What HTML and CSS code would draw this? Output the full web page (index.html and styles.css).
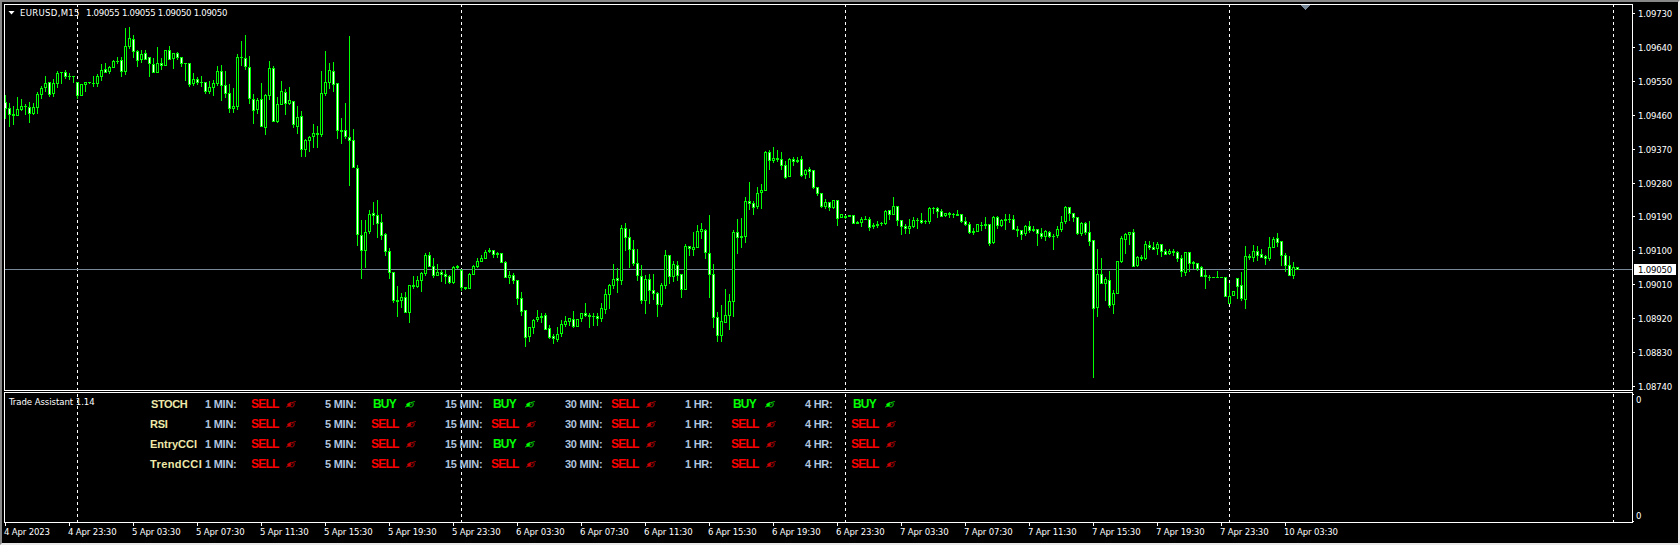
FILE: index.html
```html
<!DOCTYPE html>
<html lang="en">
<head>
  <meta charset="UTF-8" />
  <meta name="viewport" content="width=device-width, initial-scale=1.0"/>
  <title>EURUSD,M15</title>
  <link rel="stylesheet" href="styles.css">
</head>
<body>

<div class="window">
  <div class="panel chart">
    <svg class="candles" id="candles" viewBox="5 5 1627 385" width="1627" height="385" shape-rendering="crispEdges">
      <path d="M5 269h1627v1h-1627z" fill="#778899"/>
      <path d="M1301 5h9v1h-1v1h-1v1h-1v1h-1v1h-1v-1h-1v-1h-1v-1h-1v-1h-1z" fill="#778899"/>
    </svg>
    <div class="title">
      <span class="arrow"></span>
      <span class="symbol">EURUSD,M15</span>
      <span class="ohlc">1.09055 1.09055 1.09050 1.09050</span>
    </div>
  </div>

  <div class="price-axis">
    <span>1.09730</span>
    <span>1.09640</span>
    <span>1.09550</span>
    <span>1.09460</span>
    <span>1.09370</span>
    <span>1.09280</span>
    <span>1.09190</span>
    <span>1.09100</span>
    <span>1.09010</span>
    <span>1.08920</span>
    <span>1.08830</span>
    <span>1.08740</span>
    <b class="current">1.09050</b>
  </div>

  <div class="panel assistant">
    <div class="assistant-name">Trade Assistant 1.14</div>
    <div class="signals" id="signals"></div>
  </div>

  <div class="sub-axis">
    <span>0</span>
    <span>0</span>
  </div>

  <div class="time-axis" id="times"></div>
</div>

<script>
  // high, low, body top, body bottom, 1 = bearish
  const candles = [
    [95,119,102,109,1],[103,127,108,115,1],[106,125,114,116,0],[97,116,109,116,0],[99,111,106,110,0],[104,115,106,107,0],
    [102,123,107,114,1],[103,115,107,114,0],[92,114,94,108,0],[86,99,88,95,0],[76,92,83,88,0],[82,97,82,95,1],
    [79,97,83,94,0],[71,88,73,84,0],[72,84,72,73,0],[70,79,72,77,1],[73,80,76,77,0],[76,83,76,77,0],
    [82,99,82,96,1],[84,96,84,96,0],[82,92,82,85,0],[82,84,82,83,0],[76,87,83,84,0],[74,87,76,84,0],
    [64,81,70,77,0],[63,73,69,73,1],[66,74,67,72,0],[60,68,61,68,0],[57,64,61,62,0],[57,77,60,72,1],
    [28,75,46,72,0],[27,49,38,47,0],[35,58,39,52,1],[50,67,51,61,1],[50,63,54,60,0],[50,60,53,60,1],
    [57,77,57,64,1],[58,73,64,73,1],[47,73,63,73,0],[58,70,63,66,1],[50,66,50,66,0],[46,60,50,60,1],
    [53,69,53,59,0],[52,60,53,58,1],[57,67,57,64,1],[63,81,63,64,0],[63,87,63,85,1],[73,86,79,84,0],
    [77,85,79,83,1],[76,87,82,83,0],[82,94,82,92,1],[81,94,87,92,0],[80,96,83,88,0],[66,86,71,84,0],
    [65,101,71,86,1],[71,98,85,94,1],[84,113,93,109,1],[88,113,106,109,0],[54,110,57,107,0],[41,66,57,58,0],
    [35,70,58,67,1],[56,104,67,99,1],[94,124,99,111,1],[98,114,100,110,0],[83,127,99,127,1],[94,135,95,128,0],
    [61,100,68,96,0],[66,122,68,122,1],[97,123,104,122,0],[81,105,91,105,0],[89,115,92,104,1],[87,105,100,104,0],
    [101,128,101,125,1],[106,134,117,127,0],[111,157,116,150,1],[139,157,140,150,0],[136,152,137,141,0],[124,148,133,137,0],
    [126,148,133,135,0],[71,137,93,135,0],[51,96,82,94,0],[63,89,70,83,0],[62,92,71,85,1],[83,139,83,131,1],
    [118,144,130,132,1],[103,139,130,137,1],[36,186,137,141,1],[129,168,140,168,1],[165,246,168,235,1],[220,279,235,251,1],
    [220,268,232,251,0],[210,234,214,232,0],[202,225,213,216,1],[200,238,215,224,1],[214,240,222,236,1],[233,256,234,252,1],
    [248,279,251,273,1],[272,303,272,301,1],[286,317,300,302,1],[293,308,297,301,0],[292,313,297,313,1],[285,323,285,313,0],
    [276,289,285,287,0],[276,288,280,287,0],[272,292,273,281,0],[253,276,255,274,0],[252,267,255,267,1],[258,278,266,276,1],
    [264,276,272,276,0],[270,282,272,275,1],[270,284,274,277,1],[275,284,276,283,1],[266,284,267,283,0],[265,269,266,268,0],
    [269,291,270,288,1],[287,290,287,289,0],[273,289,274,289,0],[265,275,266,275,0],[258,268,261,267,0],[255,262,258,262,0],
    [250,259,252,259,0],[248,253,250,252,0],[250,258,250,255,1],[252,258,253,255,0],[253,263,253,263,1],[261,278,262,278,1],
    [271,284,275,278,0],[273,284,275,281,1],[280,305,280,299,1],[292,316,298,312,1],[310,347,310,338,1],[327,342,327,337,0],
    [319,334,320,328,0],[310,322,317,320,0],[313,323,316,318,0],[313,330,315,330,1],[325,339,328,338,1],[334,344,336,339,1],
    [327,342,334,340,0],[320,337,324,334,0],[316,327,321,325,0],[318,326,318,322,0],[311,328,319,327,1],[319,327,319,327,0],
    [313,322,313,319,0],[303,317,313,316,1],[313,328,315,317,0],[313,326,316,317,0],[313,326,316,319,1],[303,322,308,319,0],
    [289,314,294,310,0],[284,309,285,295,0],[264,289,279,286,0],[268,293,278,281,1],[225,285,228,281,0],[223,251,228,238,1],
    [229,268,237,250,1],[240,266,249,264,1],[249,281,263,276,1],[265,304,276,301,1],[275,314,279,301,0],[274,304,279,291,1],
    [274,300,290,294,1],[292,317,293,305,1],[283,307,285,305,0],[250,289,255,286,0],[255,284,255,277,1],[261,282,264,277,0],
    [261,281,265,276,1],[274,298,274,290,1],[244,290,246,290,0],[246,256,246,249,1],[232,256,247,250,0],[225,248,231,248,0],
    [223,239,229,232,0],[229,259,230,253,1],[215,298,253,275,1],[264,328,274,318,1],[312,342,317,336,1],[305,342,321,336,0],
    [289,323,315,323,0],[294,330,301,316,0],[230,317,232,302,0],[219,254,232,238,1],[218,248,236,238,0],[197,243,201,237,0],
    [182,210,201,204,1],[201,215,203,208,1],[187,209,193,207,0],[184,209,190,193,0],[151,191,152,191,0],[150,170,152,161,1],
    [147,163,158,161,0],[150,162,158,160,0],[152,170,159,166,1],[161,179,165,178,1],[158,177,159,177,0],[157,166,159,162,1],
    [157,163,160,162,0],[156,177,159,176,1],[169,179,170,175,0],[167,178,169,172,1],[170,189,170,188,1],[187,196,187,194,1],
    [193,208,193,207,1],[199,209,202,207,0],[202,211,202,208,1],[200,209,200,208,0],[200,226,200,219,1],[214,218,214,218,0],
    [215,219,216,218,0],[215,217,215,217,0],[215,224,215,224,1],[221,224,222,224,0],[217,227,219,223,0],[216,220,219,220,0],
    [217,231,219,228,1],[223,229,225,227,0],[221,228,224,226,0],[222,226,223,224,0],[210,225,211,224,0],[210,220,210,215,1],
    [197,215,206,215,0],[206,226,206,221,1],
    [220,235,220,227,1],[224,234,226,229,1],[219,234,226,229,0],[217,228,220,227,0],[218,229,220,221,0],[213,224,220,223,1],
    [220,224,221,222,0],[207,224,208,222,0],[207,214,208,209,0],[207,218,208,212,1],[209,217,211,217,1],[213,217,213,216,0],
    [212,218,213,215,0],[213,218,214,215,0],[210,216,214,216,0],[214,223,214,222,1],[217,226,221,225,1],[222,234,224,233,1],
    [228,235,231,233,0],[224,232,224,232,0],[222,231,225,226,0],[217,229,224,226,0],[224,246,224,244,1],[216,244,217,243,0],
    [216,229,217,226,1],[219,227,220,226,0],[214,230,219,221,0],[214,223,219,220,0],[215,230,219,230,1],[226,237,229,231,0],
    [230,240,230,235,1],[225,236,226,234,0],[221,233,226,231,1],[226,232,229,231,0],[229,246,229,234,1],[228,239,233,237,1],
    [230,241,231,237,0],[231,238,232,237,1],[234,250,236,237,0],[226,238,229,236,0],[216,232,222,230,0],[206,224,207,222,0],
    [207,221,207,214,1],[213,222,213,218,1],[217,235,217,234,1],[222,236,223,234,0],[222,235,223,233,1],[221,246,232,242,1],
    [240,378,240,309,1],[249,317,274,308,0],[258,284,274,284,1],[277,301,279,284,0],[271,308,280,306,1],[290,314,293,305,0],
    [261,294,261,294,0],[236,263,238,262,0],[233,254,234,240,0],[232,245,232,235,0],[229,267,232,267,1],[256,267,257,266,0],
    [255,261,257,259,0],[241,260,244,259,0],[241,250,245,248,1],[242,250,247,250,1],[242,255,244,249,0],[244,257,244,252,1],
    [249,255,251,255,1],[249,255,251,254,0],[249,256,251,253,0],[251,262,252,259,1],[255,277,258,272,1],[252,276,252,273,0],
    [252,272,252,264,1],[261,269,262,264,0],[263,271,263,269,1],[266,277,267,277,1],[270,289,275,277,0],[275,281,277,278,0],
    [277,278,277,278,0],[271,278,277,278,0],[277,278,277,278,0],[277,297,277,297,1],[283,304,296,304,0],[291,296,291,296,0],
    [278,299,278,287,1],[272,301,285,299,1],[246,309,256,300,0],[254,260,256,258,0],[245,262,251,258,0],[246,261,251,256,1],
    [249,258,254,258,1],[255,265,256,259,1],[237,261,247,259,0],[237,248,239,248,0],[233,247,238,243,1],[241,266,241,256,1],
    [253,272,255,266,1],[256,276,265,276,1],[262,279,267,276,0],[267,270,267,270,1]
  ];

  let green = "", white = "", black = "";
  candles.forEach(([h, l, t, b, down], i) => {
    const x = 5 + i * 4;
    green += `M${x} ${h}h1v${l - h}h-1zM${x - 1} ${t}h3v${b - t}h-3z`;
    if (b - t > 2) {
      const core = `M${x} ${t + 1}h1v${b - t - 2}h-1z`;
      if (down) white += core; else black += core;
    }
  });
  document.getElementById("candles").innerHTML +=
    `<path d="${green}" fill="#00ff00"/><path d="${white}" fill="#fff"/><path d="${black}" fill="#000"/>`;

  // Indicator table
  const frames = ["1 MIN:", "5 MIN:", "15 MIN:", "30 MIN:", "1 HR:", "4 HR:"];
  const rows = [
    ["STOCH", "SBBSBB"],
    ["RSI", "SSSSSS"],
    ["EntryCCI", "SSBSSS"],
    ["TrendCCI", "SSSSSS"]
  ];
  const hand = `<svg class="hand" viewBox="0 0 10 7" width="10" height="7"><path d="M0 6.3L2 5M6.5 1.4L9.8 .5"/><path class="fist" d="M1.2 3L4.8 1V5.4L1.8 5.8z"/><path d="M4.5 1.7H7.2L8.3 2.8L7.8 5L6.5 5.8H4.5M5.3 3.4L6.6 2.8"/></svg>`;
  document.getElementById("signals").innerHTML = rows.map(([name, calls]) =>
    `<div class="row"><span class="name ${name.toLowerCase()}">${name}</span>` +
    frames.map((f, i) => {
      const buy = calls[i] === "B";
      return `<span class="cell ${buy ? "buy" : "sell"}"><i>${f}</i><b>${buy ? "BUY" : "SELL"}</b>${hand}</span>`;
    }).join("") + `</div>`).join("");

  // Time scale, one label per 16 bars
  const hours = ["03:30", "07:30", "11:30", "15:30", "19:30", "23:30"];
  const times = ["4 Apr 2023", "4 Apr 23:30"];
  [5, 6, 7].forEach(d => hours.forEach(t => times.push(`${d} Apr ${t}`)));
  times.push("10 Apr 03:30");
  document.getElementById("times").innerHTML = times.map(t => `<span>${t}</span>`).join("");
</script>

</body>
</html>
```

FILE: styles.css
```css
* { margin: 0; padding: 0; box-sizing: border-box; }

body {
  background: #000;
  color: #fff;
  font-family: "DejaVu Sans Condensed", "Noto Sans", sans-serif;
  font-size: 9.5px;
  line-height: 11px;
  overflow: hidden;
}

.window {
  width: 1680px;
  height: 545px;
  background: #000;
  border: 2px solid;
  border-color: #888 #e8e8e8 #e8e8e8 #888;
  padding: 2px 0 0 2px;
  display: grid;
  grid-template-columns: 1629px 1fr;
  grid-template-rows: 387px 131px 1fr;
  row-gap: 1px;
}

.panel {
  position: relative;
  border: 1px solid #fff;
}

/* day separators, every 96 bars */
.panel::before {
  content: "";
  position: absolute;
  inset: 0;
}

.chart::before {
  background:
    repeating-linear-gradient(to bottom, transparent 0 2px, #000 2px 5px, transparent 5px 6px),
    repeating-linear-gradient(to right, transparent 0 72px, #fff 72px 73px, transparent 73px 384px);
}

.assistant::before {
  background:
    repeating-linear-gradient(to bottom, #000 0 1px, transparent 1px 4px, #000 4px 6px),
    repeating-linear-gradient(to right, transparent 0 72px, #fff 72px 73px, transparent 73px 384px);
}

.candles {
  position: absolute;
  inset: 0;
}

.title {
  position: relative;
  display: flex;
  align-items: center;
  padding: 2px 0 0 3px;
  white-space: nowrap;
}

.arrow {
  width: 7px;
  height: 4px;
  background: #fff;
  clip-path: polygon(0 0, 100% 0, 50% 100%);
  margin-right: 5px;
}

.symbol { width: 66px; letter-spacing: 0.3px; }
.ohlc { letter-spacing: -0.27px; }

.price-axis {
  position: relative;
  display: flex;
  flex-direction: column;
  justify-content: space-between;
  padding-top: 4px;
  margin-bottom: -1px;
  letter-spacing: -0.2px;
}

.price-axis span {
  display: flex;
  align-items: center;
}

.price-axis span::before {
  content: "";
  width: 2px;
  height: 1px;
  background: #fff;
  margin-right: 3px;
}

.current {
  position: absolute;
  top: 260px;
  left: 1px;
  width: 42px;
  padding-left: 4px;
  background: #fff;
  color: #000;
  font-weight: normal;
}

.assistant-name {
  position: absolute;
  top: 3px;
  left: 4px;
  letter-spacing: -0.05px;
}

.signals {
  position: relative;
  padding: 1px 0 0 145px;
  font-family: "Liberation Sans", Arial, sans-serif;
  font-size: 11px;
  font-weight: bold;
}

.row {
  display: flex;
  align-items: center;
  height: 20px;
}

.name {
  width: 55px;
  color: #eee8aa;
}

.stoch { letter-spacing: -0.4px; text-indent: 1px; }
.rsi { letter-spacing: -0.3px; }
.trendcci { letter-spacing: 0.4px; }

.cell {
  width: 120px;
  display: flex;
  align-items: center;
}

.cell i {
  width: 46px;
  color: #b0c4de;
  font-style: normal;
  letter-spacing: -0.25px;
}

.cell b {
  width: 35px;
  font-size: 12px;
  letter-spacing: -0.8px;
  padding-top: 1px;
}

.sell { color: #f00; }
.buy { color: #0f0; }
.buy b { padding-left: 2px; width: 34px; }

.hand {
  fill: none;
  stroke: currentColor;
  stroke-width: 0.8;
}
.hand .fist { fill: currentColor; stroke: none; }
.sell .hand { opacity: 0.8; }

.sub-axis {
  display: flex;
  flex-direction: column;
  justify-content: space-between;
  padding: 2px 0 2px 3px;
  position: relative;
}

.sub-axis::before {
  content: "";
  position: absolute;
  left: 0;
  top: 2px;
  bottom: 1px;
  width: 1px;
  background: linear-gradient(#fff 1px, transparent 1px calc(100% - 1px), #fff calc(100% - 1px));
}

.time-axis {
  grid-column: 1 / 3;
  display: flex;
  margin-top: -1px;
}

.time-axis span {
  width: 64px;
  flex: none;
  white-space: nowrap;
  padding-top: 3px;
  letter-spacing: -0.17px;
  background: linear-gradient(#fff, #fff) 1px 0 / 1px 3px no-repeat;
}
```
